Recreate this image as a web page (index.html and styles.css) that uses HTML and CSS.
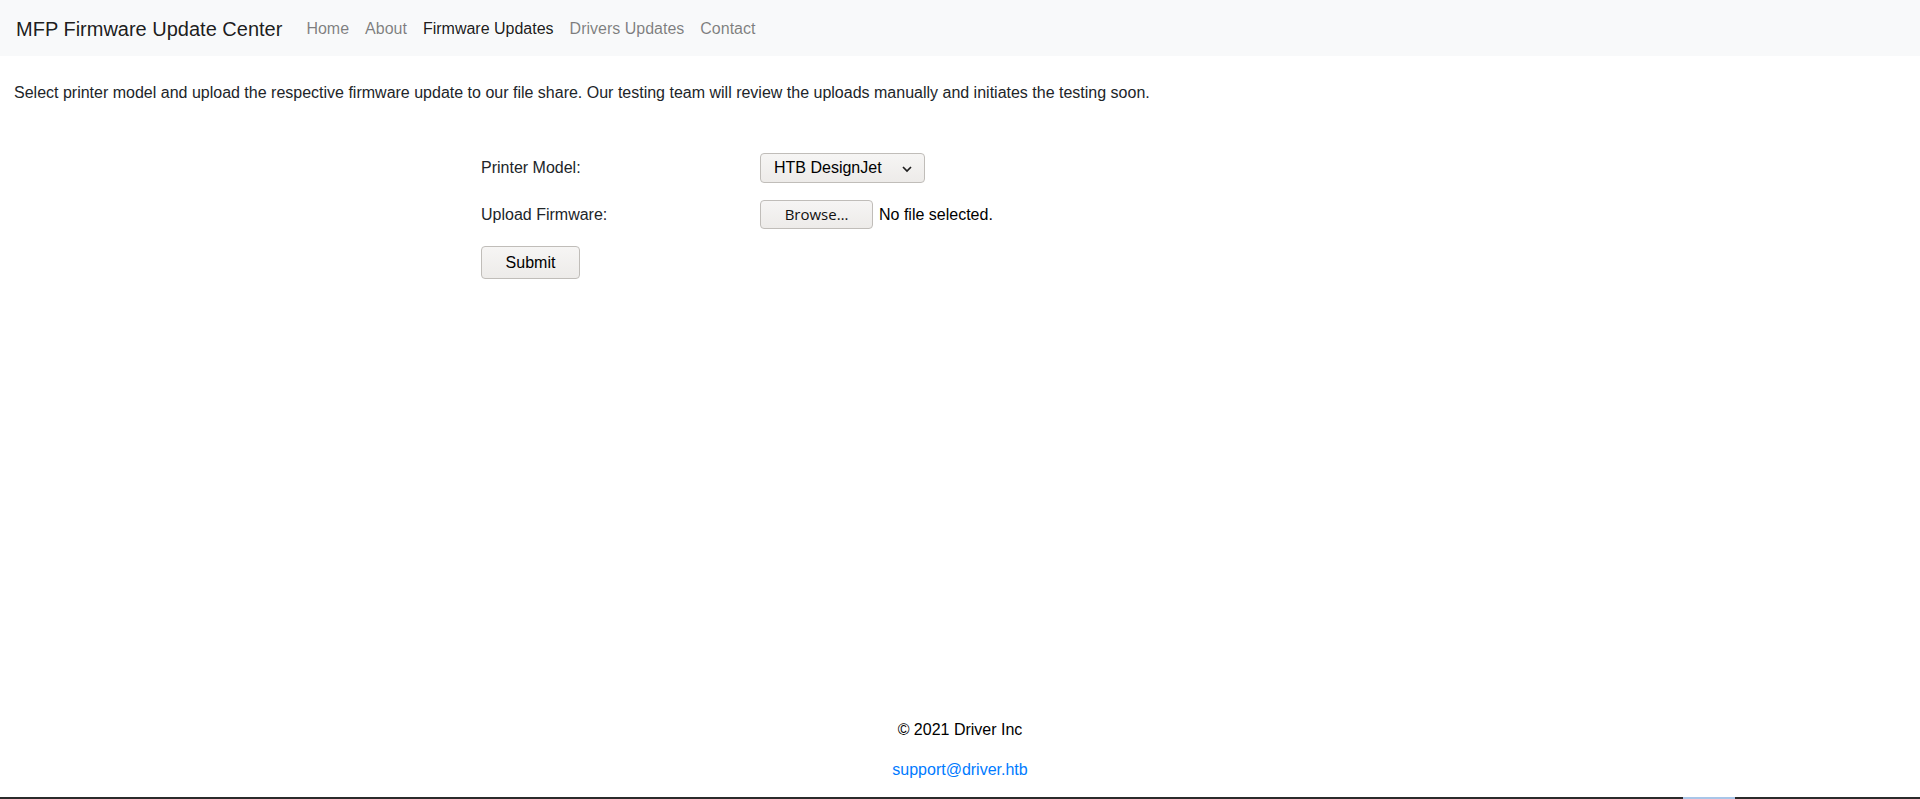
FILE: index.html
```html
<!DOCTYPE html>
<html lang="en">
<head>
<meta charset="utf-8">
<title>MFP Firmware Update Center</title>
<link rel="stylesheet" href="styles.css">
</head>
<body>
<nav class="navbar">
  <a class="brand" href="#">MFP Firmware Update Center</a>
  <ul class="nav">
    <li><a class="nav-link" href="#">Home</a></li>
    <li><a class="nav-link" href="#">About</a></li>
    <li><a class="nav-link active" href="#">Firmware Updates</a></li>
    <li><a class="nav-link" href="#">Drivers Updates</a></li>
    <li><a class="nav-link" href="#">Contact</a></li>
  </ul>
</nav>
<main class="content">
  <p class="intro">Select printer model and upload the respective firmware update to our file share. Our testing team will review the uploads manually and initiates the testing soon.</p>
  <div class="form-wrap">
    <form class="upload-form">
      <label class="label">Printer Model:</label>
      <div class="field">
        <div class="select">
          <span>HTB DesignJet</span>
          <svg class="chev" width="12" height="8" viewBox="0 0 12 8"><path d="M2 2 L6 6 L10 2" fill="none" stroke="#1e1e1e" stroke-width="1.7"/></svg>
        </div>
      </div>
      <label class="label">Upload Firmware:</label>
      <div class="field">
        <span class="btn browse">Browse…</span>
        <span class="nofile">No file selected.</span>
      </div>
      <div class="submit-cell"><span class="btn submit">Submit</span></div>
    </form>
  </div>
</main>
<footer class="footer">
  <p>© 2021 Driver Inc</p>
  <p><a href="#" class="mail">support@driver.htb</a></p>
</footer>
<div class="taskbar"><span class="task-active"></span></div>
</body>
</html>
```
FILE: styles.css
```css
* { box-sizing: border-box; }
html, body { height: 100%; }
body {
  margin: 0;
  font-family: "Liberation Sans", Arial, sans-serif;
  font-size: 16px;
  line-height: 1.5;
  color: #212529;
  background: #fff;
  display: flex;
  flex-direction: column;
  min-height: 100vh;
}
.navbar {
  background: #f8f9fa;
  height: 56px;
  display: flex;
  align-items: center;
  padding: 2px 16px 0;
}
.brand {
  font-size: 20px;
  line-height: 30px;
  color: rgba(0,0,0,.9);
  text-decoration: none;
  margin-right: 16px;
}
.nav {
  list-style: none;
  margin: 0;
  padding: 0;
  display: flex;
}
.nav-link {
  display: block;
  padding: 8px;
  color: rgba(0,0,0,.5);
  text-decoration: none;
}
.nav-link.active { color: rgba(0,0,0,.9); }
.content {
  padding: 25px 14px 0;
}
.intro { margin: 0 0 16px; }
.form-wrap {
  width: 958px;
  margin: 0 auto;
  padding-top: 32px;
}
.upload-form {
  display: grid;
  grid-template-columns: 279px auto;
  row-gap: 17px;
  align-items: center;
}
.label { line-height: 24px; }
.field { display: flex; align-items: center; }
.select {
  width: 165px;
  height: 30px;
  border: 1px solid #c0bdb9;
  border-radius: 4px;
  background: linear-gradient(#f6f5f4, #edebe9);
  display: flex;
  align-items: center;
  justify-content: space-between;
  padding: 0 11px 0 13px;
  font-size: 16px;
  color: #000;
}
.chev { margin-top: 1px; }
.btn {
  display: inline-flex;
  align-items: center;
  justify-content: center;
  border: 1px solid #c0bdb9;
  border-radius: 4px;
  background: linear-gradient(#f6f5f4, #edebe9);
  color: #000;
}
.browse {
  width: 113px;
  height: 29px;
  font-family: "Open Sans", "Noto Sans", sans-serif;
  font-size: 15px;
  color: #111;
}
.nofile { margin-left: 6px; color: #000; }
.submit-cell { grid-column: 1 / 2; }
.submit {
  width: 99px;
  height: 33px;
  font-size: 16px;
}
.footer {
  margin-top: auto;
  text-align: center;
  padding-bottom: 1px;
  color: #000;
}
.footer p { margin: 0 0 16px; }
.mail { color: #007bff; text-decoration: none; }
.taskbar {
  position: fixed;
  left: 0;
  right: 0;
  bottom: 0;
  height: 2px;
  background: #2b2b2b;
}
.task-active {
  position: absolute;
  left: 1683px;
  width: 52px;
  height: 2px;
  background: #a9c6e8;
}
```
